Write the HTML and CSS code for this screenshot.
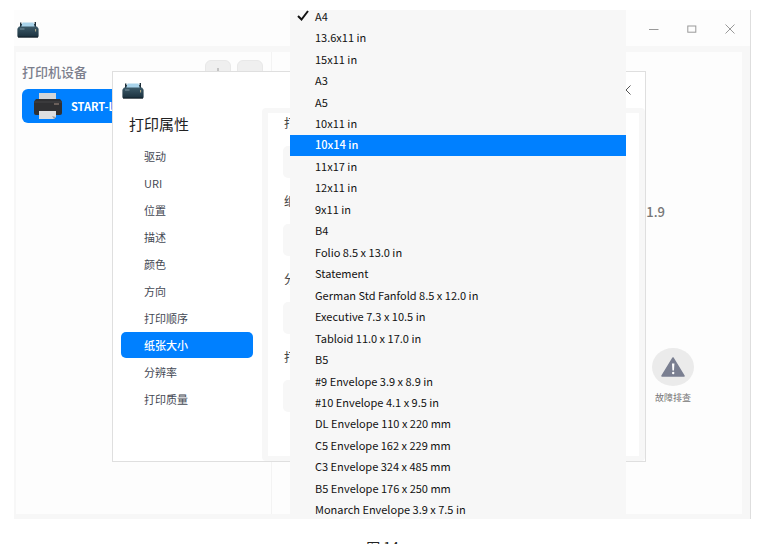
FILE: index.html
```html
<!DOCTYPE html>
<html lang="zh-CN">
<head>
<meta charset="UTF-8">
<meta name="viewport" content="width=device-width, initial-scale=1.0">
<title>打印属性</title>
<link rel="stylesheet" href="styles.css">
</head>
<body>
    <svg class="symbols" aria-hidden="true">
        <defs>
            <linearGradient id="shell" x1="0" y1="0" x2="0" y2="1">
                <stop offset="0" stop-color="#3c5a69"/>
                <stop offset="1" stop-color="#1a303d"/>
            </linearGradient>
        </defs>
        <symbol id="app-icon" viewBox="0 0 22 17">
            <path d="M3 6V1.5h1.4V3h13.2V1H19v5z" fill="#1d2f3a"/>
            <path d="M5.5 1.5h11l1.3 4.5H4.2z" fill="#a9d3ea"/>
            <path d="M2 5.5h18l1.6 2.2V15a1.3 1.3 0 0 1-1.3 1.3H1.7A1.3 1.3 0 0 1 .4 15V7.7z" fill="url(#shell)"/>
            <path d="M1 15.6h20v1H1z" fill="#101c24"/>
            <path d="M3 8h4.5" stroke="#8aa3b0" stroke-width=".8"/>
            <path d="M18.6 8v2.5" stroke="#b8b08a" stroke-width="1"/>
        </symbol>
    </svg>

    <main class="window">
        <header class="titlebar">
            <svg class="app-icon"><use href="#app-icon"/></svg>
            <div class="window-controls">
                <button aria-label="最小化"><svg viewBox="0 0 10 10"><path d="M0 5.5h9.5"/></svg></button>
                <button aria-label="最大化"><svg viewBox="0 0 10 10"><rect x=".8" y="2" width="8" height="6.2"/></svg></button>
                <button aria-label="关闭"><svg viewBox="0 0 10 10"><path d="M.5.5l9 9M9.5.5l-9 9"/></svg></button>
            </div>
        </header>

        <div class="workspace">
            <aside class="devices">
                <div class="devices-head">
                    <h1>打印机设备</h1>
                    <button class="tool" aria-label="添加"><svg viewBox="0 0 10 10"><path d="M5 0v10M0 5h10"/></svg></button>
                    <button class="tool" aria-label="删除"><svg viewBox="0 0 10 10"><path d="M0 5h10"/></svg></button>
                </div>
                <button class="device">
                    <svg viewBox="0 0 30 27">
                        <path d="M6 0h17v8H6z" fill="#d3d5d7"/>
                        <path d="M3 6h24l2 2.5V20a2 2 0 0 1-2 2H3a2 2 0 0 1-2-2V8.500z" fill="#303032"/>
                        <path d="M1 9h28" stroke="#454547" stroke-width="1"/>
                        <path d="M21 11h5" stroke="#a58f83" stroke-width="1"/>
                        <path d="M6 18h17v6l-2 2H6z" fill="#dcdee0"/>
                        <path d="M23 24l-4-1 2 3z" fill="#9b9da0"/>
                    </svg>
                    <span>START-L</span>
                </button>
            </aside>

            <section class="detail">
                <p class="version">1.9</p>
                <button class="troubleshoot">
                    <span class="round">
                        <svg viewBox="0 0 24 20">
                            <path d="M12 1L23 19H1z" fill="#7a7f91" stroke="#7a7f91" stroke-width="1.5" stroke-linejoin="round"/>
                            <path d="M11 6.500h2.400l-.4 7h-1.600z" fill="#fff"/>
                            <circle cx="12.2" cy="16" r="1.2" fill="#fff"/>
                        </svg>
                    </span>
                    故障排查
                </button>
            </section>
        </div>

        <div class="dialog" role="dialog" aria-labelledby="dialog-title">
            <header class="dialog-bar">
                <svg class="app-icon"><use href="#app-icon"/></svg>
                <button class="dialog-close" aria-label="关闭"><svg viewBox="0 0 10 10"><path d="M.5.5l9 9M9.5.5l-9 9"/></svg></button>
            </header>
            <div class="dialog-body">
                <nav class="options">
                    <h2 id="dialog-title">打印属性</h2>
                    <button>驱动</button>
                    <button>URI</button>
                    <button>位置</button>
                    <button>描述</button>
                    <button>颜色</button>
                    <button>方向</button>
                    <button>打印顺序</button>
                    <button class="active">纸张大小</button>
                    <button>分辨率</button>
                    <button>打印质量</button>
                </nav>
                <form class="fields">
                    <label for="order">打</label>
                    <select id="order"></select>
                    <label for="paper">纸</label>
                    <select id="paper"></select>
                    <label for="resolution">分</label>
                    <select id="resolution"></select>
                    <label for="quality">打</label>
                    <select id="quality"></select>
                </form>
            </div>
        </div>

        <ul class="paper-menu" role="listbox" aria-label="纸张大小">
            <li role="option" aria-selected="true"><svg class="check" viewBox="0 0 12 11"><path d="M1 6l3.500 3.500L11 1"/></svg>A4</li>
            <li role="option">13.6x11 in</li>
            <li role="option">15x11 in</li>
            <li role="option">A3</li>
            <li role="option">A5</li>
            <li role="option">10x11 in</li>
            <li role="option" class="highlight">10x14 in</li>
            <li role="option">11x17 in</li>
            <li role="option">12x11 in</li>
            <li role="option">9x11 in</li>
            <li role="option">B4</li>
            <li role="option">Folio 8.5 x 13.0 in</li>
            <li role="option">Statement</li>
            <li role="option">German Std Fanfold 8.5 x 12.0 in</li>
            <li role="option">Executive 7.3 x 10.5 in</li>
            <li role="option">Tabloid 11.0 x 17.0 in</li>
            <li role="option">B5</li>
            <li role="option">#9 Envelope 3.9 x 8.9 in</li>
            <li role="option">#10 Envelope 4.1 x 9.5 in</li>
            <li role="option">DL Envelope 110 x 220 mm</li>
            <li role="option">C5 Envelope 162 x 229 mm</li>
            <li role="option">C3 Envelope 324 x 485 mm</li>
            <li role="option">B5 Envelope 176 x 250 mm</li>
            <li role="option">Monarch Envelope 3.9 x 7.5 in</li>
        </ul>
    </main>
    <p class="caption">图 14</p>
</body>
</html>
```
FILE: styles.css
```css
* {
    box-sizing: border-box;
}
html {
    height: 100%;
    overflow: hidden;
}
body {
    height: 100%;
    margin: 0;
    padding: 10px 13px 0 14px;
    display: flex;
    flex-direction: column;
    background: #fff;
    color: #222;
    font-family: "Noto Sans CJK SC", sans-serif;
    font-size: 12px;
}
h1, h2, p, ul {
    margin: 0;
    padding: 0;
}
button {
    border: 0;
    padding: 0;
    background: none;
    color: inherit;
    font: inherit;
}
svg {
    display: block;
    fill: none;
}
.symbols {
    position: absolute;
    width: 0;
    height: 0;
}
.app-icon {
    width: 22px;
    height: 17px;
}

/* main window */
.window {
    position: relative;
    flex: 1;
    min-height: 0;
    display: flex;
    flex-direction: column;
    overflow: hidden;
    background: #f7f7f7;
    border-right: 1px solid #dedede;
}
.titlebar {
    height: 36px;
    flex: none;
    display: flex;
    align-items: center;
    justify-content: space-between;
    padding: 2px 15px 0 3px;
    background: #fdfdfd;
}
.window-controls {
    display: flex;
    gap: 28px;
}
.window-controls svg, .dialog-close svg, .tool svg {
    width: 10px;
    height: 10px;
    stroke: #999;
}
.workspace {
    flex: 1;
    display: flex;
    margin: 6px 8px 5px 2px;
    background: #fdfdfd;
}
.devices {
    width: 256px;
    padding: 8px 8px 0 6px;
    border-right: 1px solid #f3f3f3;
}
.devices-head {
    display: flex;
    align-items: center;
    gap: 6px;
    height: 25px;
}
.devices-head h1 {
    flex: 1;
    padding-bottom: 2px;
    color: #7b7e8c;
    font-size: 13px;
    font-weight: 500;
}
.tool {
    width: 26px;
    height: 25px;
    display: grid;
    place-items: center;
    border: 1px solid #e8e8e8;
    border-radius: 6px;
    background: #efefef;
}
.device {
    width: 100%;
    height: 34px;
    margin-top: 4px;
    padding-left: 11px;
    display: flex;
    align-items: center;
    gap: 8px;
    border-radius: 6px;
    background: #0080ff;
    color: #fff;
    font-size: 11px;
    font-weight: 700;
}
.device svg {
    width: 30px;
    height: 27px;
}
.detail {
    flex: 1;
    display: flex;
    flex-direction: column;
    align-items: flex-end;
    justify-content: space-between;
    padding: 150px 48px 109px 0;
}
.version {
    padding-right: 29px;
    color: #777;
    font-size: 13px;
    line-height: 20px;
    font-weight: 500;
}
.troubleshoot {
    display: flex;
    flex-direction: column;
    align-items: center;
    gap: 5px;
    color: #777;
    font-size: 9px;
    line-height: 14px;
}
.round {
    width: 42px;
    height: 38px;
    display: grid;
    place-items: center;
    border-radius: 50%;
    background: #ebebeb;
}
.round svg {
    width: 24px;
    height: 20px;
}

/* properties dialog */
.dialog {
    position: absolute;
    top: 61px;
    right: 104px;
    bottom: 57px;
    left: 98px;
    display: flex;
    flex-direction: column;
    border: 1px solid #dfdfdf;
    background: #fff;
}
.dialog-bar {
    height: 36px;
    flex: none;
    display: flex;
    align-items: center;
    justify-content: space-between;
    padding: 0 14px 0 9px;
}
.dialog-close svg {
    stroke: #555;
}
.dialog-body {
    flex: 1;
    min-height: 0;
    display: flex;
}
.options {
    width: 149px;
    flex: none;
    padding: 2px 9px 0 8px;
    display: flex;
    flex-direction: column;
    gap: 1px;
}
.options h2 {
    margin-bottom: 4px;
    padding-left: 8px;
    font-size: 15px;
    line-height: 28px;
    font-weight: 400;
}
.options button {
    height: 26px;
    padding-left: 23px;
    border-radius: 5px;
    color: #454954;
    font-size: 11px;
    text-align: left;
}
.options .active {
    background: #0080ff;
    color: #fff;
    font-weight: 500;
}
.fields {
    flex: 1;
    display: flex;
    flex-direction: column;
    overflow: hidden;
    padding: 0 15px;
    border: solid #f7f7f7;
    border-width: 5px 6px 5px 6px;
    border-radius: 4px;
    color: #444;
}
.fields label {
    margin-bottom: 13px;
    padding-left: 1px;
    line-height: 20px;
}
.fields select {
    height: 32px;
    flex: none;
    margin-bottom: 13px;
    appearance: none;
    border: 0;
    border-radius: 5px;
    background: #f7f7f7;
}

/* open paper list */
.paper-menu {
    position: absolute;
    top: -4px;
    right: 124px;
    bottom: -2px;
    left: 276px;
    display: grid;
    grid-auto-rows: 1fr;
    background: #f7f7f7;
    list-style: none;
    font-size: 11px;
    color: #111;
}
.paper-menu li {
    position: relative;
    display: flex;
    align-items: center;
    min-height: 0;
    padding: 0 0 2px 25px;
    line-height: 18px;
}
.paper-menu .highlight {
    background: #0080ff;
    color: #fff;
    font-weight: 500;
}
.check {
    position: absolute;
    left: 7px;
    width: 12px;
    height: 11px;
    stroke: #111;
    stroke-width: 2;
}

.caption {
    height: 25px;
    flex: none;
    padding-top: 18px;
    font-size: 14px;
    line-height: 20px;
    text-align: center;
}
```
